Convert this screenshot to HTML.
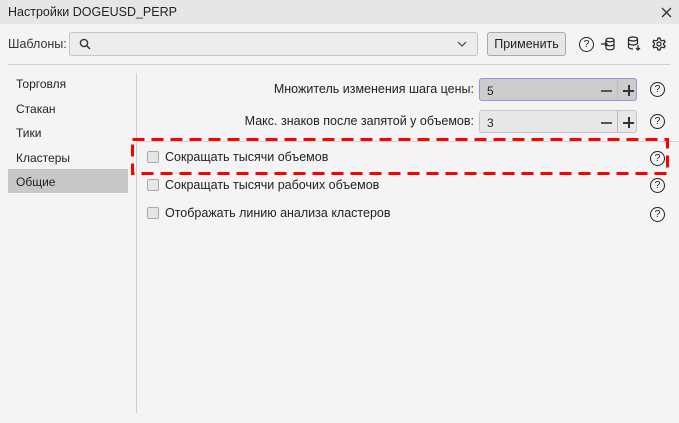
<!DOCTYPE html><html><head><meta charset="utf-8"><style>
*{box-sizing:border-box;margin:0;padding:0}
body{width:679px;height:423px;overflow:hidden;background:#f4f4f4;font-family:"Liberation Sans",sans-serif;font-size:12px;color:#222;position:relative}
.a{position:absolute}
.q{position:absolute;width:15px;height:15px;border:1.2px solid #222;border-radius:50%;font-size:10.5px;line-height:13px;text-align:center}
.cb{position:absolute;width:12px;height:12px;border:1px solid #aaa;border-radius:2px;background:#e6e6e6}
.inp{position:absolute;left:479px;width:158px;height:23px;border:1px solid #c4c4c4;border-radius:3px;background:#e8e8e8}
.inp span{position:absolute;left:7px;top:5px}
.inp .m{position:absolute;left:121px;top:11px;width:11px;height:1.5px;background:#555}
.inp .s{position:absolute;left:137px;top:0;width:1px;height:21px;background:#bbb}
.inp .p1{position:absolute;left:143px;top:11px;width:11px;height:1.5px;background:#333}
.inp .p2{position:absolute;left:148px;top:6px;width:1.5px;height:11px;background:#333}
</style></head><body>
<div class="a" style="left:0;top:0;width:679px;height:24px;background:#e6e6e6"></div>
<div class="a" style="left:8px;top:5px;font-size:12.5px">Настройки DOGEUSD_PERP</div>
<svg class="a" style="left:661px;top:7px" width="11" height="11"><path d="M1 1L10 10M10 1L1 10" stroke="#333" stroke-width="1.3"/></svg>
<div class="a" style="left:8px;top:37px;font-size:12.5px;color:#333">Шаблоны:</div>
<div class="a" style="left:69px;top:32px;width:409px;height:24px;border:1px solid #c4c4c4;border-radius:3px;background:#ececec"></div>
<svg class="a" style="left:79px;top:38px" width="12" height="12"><circle cx="5" cy="5" r="3.6" fill="none" stroke="#333" stroke-width="1.4"/><path d="M7.6 7.6L11 11" stroke="#333" stroke-width="1.5"/></svg>
<svg class="a" style="left:457px;top:41px" width="10" height="6"><path d="M1 1L5 5L9 1" fill="none" stroke="#444" stroke-width="1.2"/></svg>
<div class="a" style="left:487px;top:32px;width:79px;height:24px;border:1px solid #aaa;border-radius:3px;background:#e6e6e6;text-align:center;line-height:22px;font-size:12.5px">Применить</div>
<div class="q" style="left:579px;top:37px">?</div>
<svg class="a" style="left:601px;top:37px" width="14" height="14" fill="none" stroke="#222" stroke-width="1.2"><ellipse cx="9" cy="3" rx="4" ry="1.8"/><path d="M5 3v8c0 1 2 1.8 4 1.8s4-.8 4-1.8V3M5 7c0 1 2 1.8 4 1.8s4-.8 4-1.8M0 7h6M4 5l2 2-2 2"/></svg>
<svg class="a" style="left:627px;top:36px" width="14" height="15" fill="none" stroke="#222" stroke-width="1.2"><ellipse cx="6" cy="3" rx="4.5" ry="2"/><path d="M1.5 3v8c0 1 2 2 4.5 2M10.5 3v5M1.5 7c0 1 2 2 4.5 2s4.5-1 4.5-2M11 9v5M9 12l2 2 2-2"/></svg>
<svg class="a" style="left:652px;top:37px" width="14" height="14" fill="none" stroke="#222" stroke-width="1.2"><circle cx="7" cy="7" r="2"/><path d="M6 1h2l.5 2 1.6.9 2-.7 1 1.7-1.5 1.4v1.4l1.5 1.4-1 1.7-2-.7-1.6.9L8 13H6l-.5-2-1.6-.9-2 .7-1-1.7 1.5-1.4V6.3L.9 4.9l1-1.7 2 .7L5.5 3z"/></svg>
<div class="a" style="left:8px;top:64px;width:662px;height:1px;background:#cfcfcf"></div>
<div class="a" style="left:136px;top:73px;width:1px;height:340px;background:#cfcfcf"></div>
<div class="a" style="left:8px;top:169px;width:120px;height:24px;background:#c8c8c8"></div>
<div class="a" style="left:16px;top:78px;line-height:13px">Торговля</div>
<div class="a" style="left:16px;top:102px">Стакан</div>
<div class="a" style="left:16px;top:126px">Тики</div>
<div class="a" style="left:16px;top:151px">Кластеры</div>
<div class="a" style="left:16px;top:175px">Общие</div>
<div class="a" style="left:200px;width:274px;text-align:right;top:82px;font-size:12.5px">Множитель изменения шага цены:</div>
<div class="inp" style="top:78px;background:#ccc;border-color:#a98ae8"><span>5</span><i class="m"></i><i class="s"></i><i class="p1"></i><i class="p2"></i></div>
<div class="q" style="left:650px;top:82px">?</div>
<div class="a" style="left:200px;width:274px;text-align:right;top:114px;font-size:12.5px">Макс. знаков после запятой у объемов:</div>
<div class="inp" style="top:110px"><span>3</span><i class="m"></i><i class="s"></i><i class="p1"></i><i class="p2"></i></div>
<div class="q" style="left:650px;top:114px">?</div>
<div class="a" style="left:137px;top:141px;width:542px;height:1px;background:#d5d5d5"></div>
<div class="cb" style="left:147px;top:151px"></div>
<div class="a" style="left:165px;top:150px;font-size:12.5px">Сокращать тысячи объемов</div>
<div class="q" style="left:650px;top:151px">?</div>
<div class="cb" style="left:147px;top:179px"></div>
<div class="a" style="left:165px;top:178px;font-size:12.5px">Сокращать тысячи рабочих объемов</div>
<div class="q" style="left:650px;top:178px">?</div>
<div class="cb" style="left:147px;top:207px"></div>
<div class="a" style="left:165px;top:206px;font-size:12.5px">Отображать линию анализа кластеров</div>
<div class="q" style="left:650px;top:207px">?</div>
<svg class="a" style="left:129px;top:137px" width="543" height="40"><rect x="3.5" y="2.5" width="535" height="34" fill="none" stroke="#f00" stroke-width="3" stroke-dasharray="12 7"/></svg>
</body></html>
